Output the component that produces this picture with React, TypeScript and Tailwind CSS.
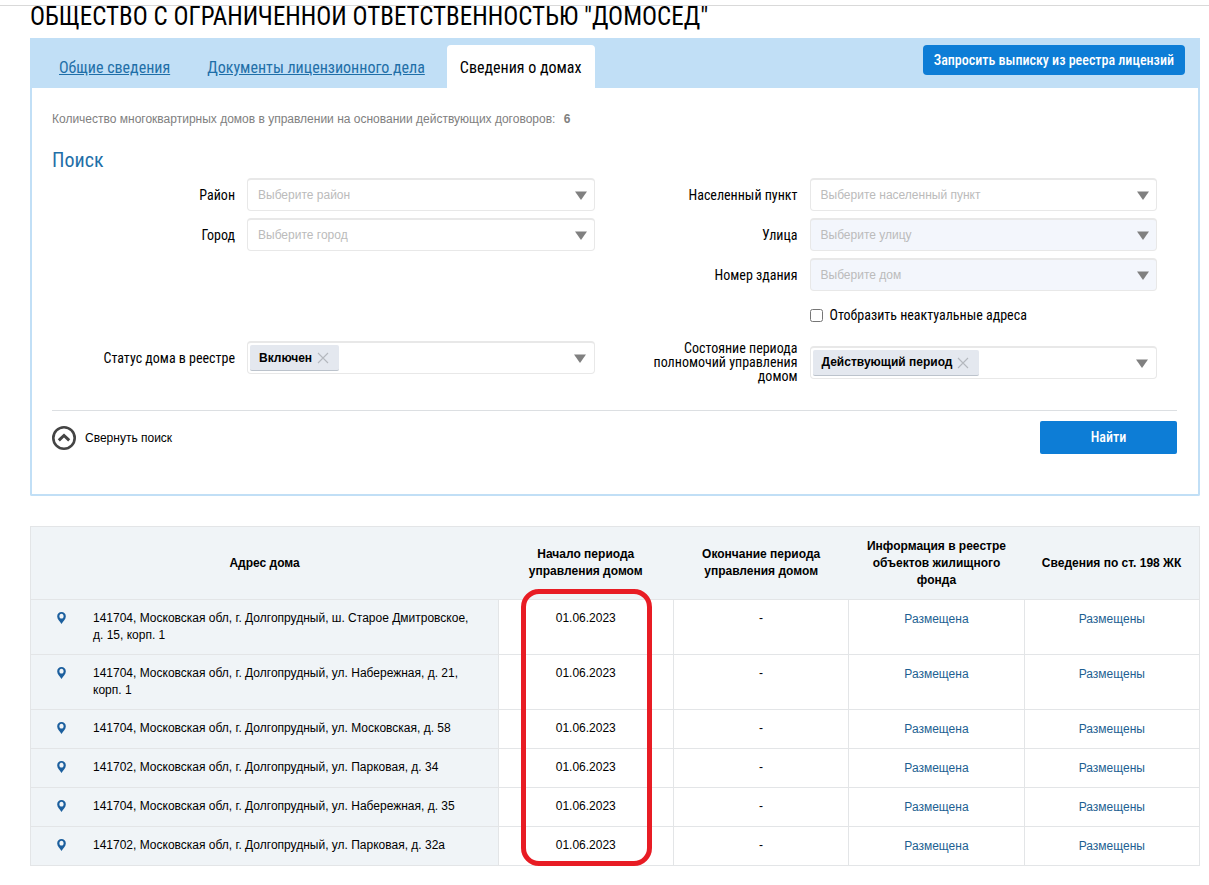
import React, { useState } from "react";

const ROWS = [
  { address: "141704, Московская обл, г. Долгопрудный, ш. Старое Дмитровское, д. 15, корп. 1", start: "01.06.2023" },
  { address: "141704, Московская обл, г. Долгопрудный, ул. Набережная, д. 21, корп. 1", start: "01.06.2023" },
  { address: "141704, Московская обл, г. Долгопрудный, ул. Московская, д. 58", start: "01.06.2023" },
  { address: "141702, Московская обл, г. Долгопрудный, ул. Парковая, д. 34", start: "01.06.2023" },
  { address: "141704, Московская обл, г. Долгопрудный, ул. Набережная, д. 35", start: "01.06.2023" },
  { address: "141702, Московская обл, г. Долгопрудный, ул. Парковая, д. 32а", start: "01.06.2023" },
];

function Triangle() {
  return (
    <svg className="pointer-events-none absolute top-1/2 right-2 -mt-1 h-[9px] w-3" viewBox="0 0 12 9" aria-hidden="true">
      <path d="M0 0.5h12L6 9z" fill="#808080" />
    </svg>
  );
}

function Label({ id, children }: { id: string; children: React.ReactNode }) {
  return (
    <label
      htmlFor={id}
      className="w-[183px] shrink-0 pl-[30px] text-right font-['Roboto_Condensed','Liberation_Sans_Narrow',Roboto,sans-serif] text-[14px] leading-[14px]"
    >
      {children}
    </label>
  );
}

function SelectRow({ id, label, placeholder, disabled = false }: { id: string; label: string; placeholder: string; disabled?: boolean }) {
  return (
    <div className="flex items-center gap-3">
      <Label id={id}>{label}</Label>
      <div className="relative flex-1">
        <select
          id={id}
          disabled={disabled}
          className="block h-[33px] w-full appearance-none rounded border border-t-2 border-[#e8e8e8] bg-white pr-8 pl-[10px] text-[12px] text-[#bbbbbb] opacity-100 disabled:bg-[#f3f6fc]"
        >
          <option>{placeholder}</option>
        </select>
        <Triangle />
      </div>
    </div>
  );
}

function TagRow({ id, label, tag }: { id: string; label: string; tag: string }) {
  const [shown, setShown] = useState(true);
  return (
    <div className="flex items-center gap-3">
      <Label id={id}>{label}</Label>
      <div className="relative flex h-[33px] flex-1 items-center rounded border border-t-2 border-[#e8e8e8] bg-white px-[2px]">
        {shown && (
          <span className="flex h-[26px] shrink-0 items-center gap-[5px] rounded-xs border-b border-[#bcc3cc] bg-[#e4e8ef] pt-px pr-[10px] pl-[9px] text-[12px] font-bold">
            {tag}
            <button type="button" aria-label="Удалить" onClick={() => setShown(false)}>
              <svg className="h-3 w-3" viewBox="0 0 12 12" aria-hidden="true">
                <path d="M1 1l10 10M11 1L1 11" stroke="#b4b8be" strokeWidth="1.1" fill="none" />
              </svg>
            </button>
          </span>
        )}
        <input id={id} type="text" className="h-full w-full min-w-0 flex-1 bg-transparent pr-8 pl-1 text-[12px] outline-none" />
        <Triangle />
      </div>
    </div>
  );
}

function Pin() {
  return (
    <svg className="h-3 w-[9px]" viewBox="0 0 9 12" aria-hidden="true">
      <path fillRule="evenodd" fill="#1c5f9e" d="M4.5 0A4.3 4.3 0 0 0 0.2 4.4C0.2 7.4 2.8 9 4.5 12C6.2 9 8.8 7.4 8.8 4.4A4.3 4.3 0 0 0 4.5 0zM4.5 1.8C5.8 1.8 6.6 2.9 6.6 4.2C6.6 5.5 5.8 6.6 4.5 6.6C3.2 6.6 2.4 5.5 2.4 4.2C2.4 2.9 3.2 1.8 4.5 1.8z" />
    </svg>
  );
}

export default function App() {
  return (
    <div className="font-['Liberation_Sans',Arial,sans-serif] text-[12px] leading-[17px] text-black">
      <header className="sticky top-0 z-10 h-[6px] border-b border-[#d9d9d9] bg-white" />
      <main className="pr-[9px] pl-[30px]">
        <h1 className="-mt-1 pb-[6px] font-['Roboto_Condensed','Liberation_Sans_Narrow',Roboto,sans-serif] text-[25px] leading-[30px]">
          ОБЩЕСТВО С ОГРАНИЧЕННОЙ ОТВЕТСТВЕННОСТЬЮ "ДОМОСЕД"
        </h1>

        <section className="rounded-b-xs border-2 border-t-0 border-[#c1dff6]">
          <div className="flex items-start bg-[#c1dff6] pt-[7px] pr-[13px] pl-3 font-['Roboto_Condensed','Liberation_Sans_Narrow',Roboto,sans-serif]">
            <nav className="flex gap-[7px] text-[16px] leading-[41px] whitespace-nowrap">
              <a href="#general" className="px-[15px] pt-[2px] text-[#1f6fa8] underline">Общие сведения</a>
              <a href="#documents" className="px-[15px] pt-[2px] text-[#1f6fa8] underline">Документы лицензионного дела</a>
              <a href="#houses" aria-current="page" className="rounded-t-sm bg-white px-[13px] pt-[2px]">Сведения о домах</a>
            </nav>
            <button type="button" className="ml-auto h-[30px] rounded-sm bg-[#0d7dd6] px-[11px] text-[14px] font-medium whitespace-nowrap text-white">
              Запросить выписку из реестра лицензий
            </button>
          </div>

          <div className="pr-[21px] pb-10 pl-5">
            <p className="pt-[23px] text-[#808080]">
              Количество многоквартирных домов в управлении на основании действующих договоров: <b className="ml-[5px]">6</b>
            </p>
            <h2 className="mt-5 mb-[6px] font-['Roboto_Condensed','Liberation_Sans_Narrow',Roboto,sans-serif] text-[20px] leading-6 text-[#1f6fa8]">Поиск</h2>

            <form onSubmit={(e) => e.preventDefault()}>
              <div className="grid grid-cols-2">
                <div className="flex flex-col gap-[7px] pr-5">
                  <SelectRow id="district" label="Район" placeholder="Выберите район" />
                  <SelectRow id="city" label="Город" placeholder="Выберите город" />
                </div>
                <div className="flex flex-col gap-[7px] pr-5">
                  <SelectRow id="locality" label="Населенный пункт" placeholder="Выберите населенный пункт" />
                  <SelectRow id="street" label="Улица" placeholder="Выберите улицу" disabled />
                  <SelectRow id="building" label="Номер здания" placeholder="Выберите дом" disabled />
                  <label className="mt-[9px] ml-[195px] flex h-4 items-center gap-[7px] font-['Roboto_Condensed','Liberation_Sans_Narrow',Roboto,sans-serif] text-[14px]">
                    <input type="checkbox" className="h-[13px] w-[13px]" />
                    Отобразить неактуальные адреса
                  </label>
                </div>
              </div>
              <div className="mt-[18px] grid grid-cols-2 items-start border-b border-[#dcdfe2] pb-[27px]">
                <div className="pr-5">
                  <TagRow id="status" label="Статус дома в реестре" tag="Включен" />
                </div>
                <div className="pr-5">
                  <TagRow id="period" label="Состояние периода полномочий управления домом" tag="Действующий период" />
                </div>
              </div>
              <div className="flex items-start justify-between pt-[10px]">
                <button type="button" className="mt-[5px] flex items-center gap-[9px]">
                  <svg className="h-6 w-6" viewBox="0 0 24 24" fill="none" stroke="#444444" aria-hidden="true">
                    <circle cx="12" cy="12" r="10.7" strokeWidth="2.6" />
                    <path d="M6.8 14.4L12 9.5L17.2 14.4" strokeWidth="3" />
                  </svg>
                  Свернуть поиск
                </button>
                <button type="submit" className="h-[33px] w-[137px] rounded-xs bg-[#0d7dd6] font-['Roboto_Condensed','Liberation_Sans_Narrow',Roboto,sans-serif] text-[14px] font-medium text-white">
                  Найти
                </button>
              </div>
            </form>
          </div>
        </section>

        <div className="relative mt-[30px]">
          <table className="w-full table-fixed border-collapse border border-[#e3e5e7]">
            <colgroup>
              <col className="w-[40%]" />
              <col className="w-[15%]" />
              <col className="w-[15%]" />
              <col className="w-[15%]" />
              <col className="w-[15%]" />
            </colgroup>
            <thead>
              <tr className="h-[73px] bg-[#f0f4f7]">
                <th className="px-2">Адрес дома</th>
                <th className="px-4">Начало периода управления домом</th>
                <th className="px-4">Окончание периода управления домом</th>
                <th className="px-4">Информация в реестре объектов жилищного фонда</th>
                <th className="px-2">Сведения по ст. 198 ЖК</th>
              </tr>
            </thead>
            <tbody>
              {ROWS.map((row) => (
                <tr key={row.address} className="h-[39px] text-center align-top">
                  <td className="border border-[#e3e5e7] bg-[#f0f4f7] py-[10px] pr-5 pl-[26px] text-left">
                    <div className="flex gap-[27px]">
                      <span className="shrink-0 pt-[2px]"><Pin /></span>
                      <span>{row.address}</span>
                    </div>
                  </td>
                  <td className="border border-[#e3e5e7] py-[10px]">{row.start}</td>
                  <td className="border border-[#e3e5e7] py-[10px]">-</td>
                  <td className="border border-[#e3e5e7] pt-[11px] pb-[9px]"><a href="#registry" className="text-[#1d5f92]">Размещена</a></td>
                  <td className="border border-[#e3e5e7] pt-[11px] pb-[9px]"><a href="#article-198" className="text-[#1d5f92]">Размещены</a></td>
                </tr>
              ))}
            </tbody>
          </table>
          <div className="pointer-events-none absolute top-[63px] bottom-0 left-[42%] w-[131px] rounded-[18px] border-5 border-[#e81c24]" />
        </div>
      </main>
    </div>
  );
}
